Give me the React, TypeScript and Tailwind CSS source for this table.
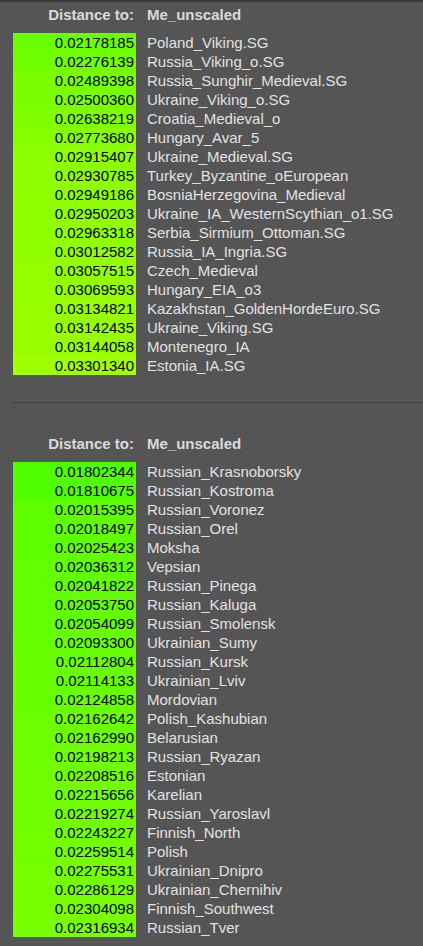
import React from "react";

type Row = { dist: string; name: string };

const ancient: Row[] = [
  { dist: "0.02178185", name: "Poland_Viking.SG" },
  { dist: "0.02276139", name: "Russia_Viking_o.SG" },
  { dist: "0.02489398", name: "Russia_Sunghir_Medieval.SG" },
  { dist: "0.02500360", name: "Ukraine_Viking_o.SG" },
  { dist: "0.02638219", name: "Croatia_Medieval_o" },
  { dist: "0.02773680", name: "Hungary_Avar_5" },
  { dist: "0.02915407", name: "Ukraine_Medieval.SG" },
  { dist: "0.02930785", name: "Turkey_Byzantine_oEuropean" },
  { dist: "0.02949186", name: "BosniaHerzegovina_Medieval" },
  { dist: "0.02950203", name: "Ukraine_IA_WesternScythian_o1.SG" },
  { dist: "0.02963318", name: "Serbia_Sirmium_Ottoman.SG" },
  { dist: "0.03012582", name: "Russia_IA_Ingria.SG" },
  { dist: "0.03057515", name: "Czech_Medieval" },
  { dist: "0.03069593", name: "Hungary_EIA_o3" },
  { dist: "0.03134821", name: "Kazakhstan_GoldenHordeEuro.SG" },
  { dist: "0.03142435", name: "Ukraine_Viking.SG" },
  { dist: "0.03144058", name: "Montenegro_IA" },
  { dist: "0.03301340", name: "Estonia_IA.SG" },
];

const modern: Row[] = [
  { dist: "0.01802344", name: "Russian_Krasnoborsky" },
  { dist: "0.01810675", name: "Russian_Kostroma" },
  { dist: "0.02015395", name: "Russian_Voronez" },
  { dist: "0.02018497", name: "Russian_Orel" },
  { dist: "0.02025423", name: "Moksha" },
  { dist: "0.02036312", name: "Vepsian" },
  { dist: "0.02041822", name: "Russian_Pinega" },
  { dist: "0.02053750", name: "Russian_Kaluga" },
  { dist: "0.02054099", name: "Russian_Smolensk" },
  { dist: "0.02093300", name: "Ukrainian_Sumy" },
  { dist: "0.02112804", name: "Russian_Kursk" },
  { dist: "0.02114133", name: "Ukrainian_Lviv" },
  { dist: "0.02124858", name: "Mordovian" },
  { dist: "0.02162642", name: "Polish_Kashubian" },
  { dist: "0.02162990", name: "Belarusian" },
  { dist: "0.02198213", name: "Russian_Ryazan" },
  { dist: "0.02208516", name: "Estonian" },
  { dist: "0.02215656", name: "Karelian" },
  { dist: "0.02219274", name: "Russian_Yaroslavl" },
  { dist: "0.02243227", name: "Finnish_North" },
  { dist: "0.02259514", name: "Polish" },
  { dist: "0.02275531", name: "Ukrainian_Dnipro" },
  { dist: "0.02286129", name: "Ukrainian_Chernihiv" },
  { dist: "0.02304098", name: "Finnish_Southwest" },
  { dist: "0.02316934", name: "Russian_Tver" },
];

// red channel goes up with distance, green stays full
const shade = (rows: Row[], d: number, lo: number, hi: number) => {
  const min = parseFloat(rows[0].dist);
  const max = parseFloat(rows[rows.length - 1].dist);
  const r = Math.round(lo + ((d - min) / (max - min)) * (hi - lo));
  return `rgb(${r}, 255, 0)`;
};

const DistTable = ({ rows, lo, hi }: { rows: Row[]; lo: number; hi: number }) => (
  <div className="pl-[13px]">
    <div className="flex h-[19px] leading-[19px] font-bold text-[#dadada]">
      <div className="w-[123px] shrink-0 text-right pr-[2px]">Distance to:</div>
      <div className="pl-[11px]">Me_unscaled</div>
    </div>
    <div className="mt-[9px]">
      {rows.map((row) => (
        <div key={row.name} className="flex h-[19px]">
          <div
            className="w-[123px] shrink-0 text-right pr-[2px] pt-[1px] leading-[18px] text-black"
            style={{ backgroundColor: shade(rows, parseFloat(row.dist), lo, hi) }}
          >
            {row.dist}
          </div>
          <div className="pl-[11px] pt-[1px] leading-[18px] text-[#e2e2e2] whitespace-nowrap">
            {row.name}
          </div>
        </div>
      ))}
    </div>
  </div>
);

const App = () => {
  return (
    <div className="min-h-[946px] bg-[#555555] border-t-2 border-[#3b3b3b] text-[15px] font-['Liberation_Sans',Arial,sans-serif] overflow-hidden">
      <div className="pt-[3px]">
        <DistTable rows={ancient} lo={106} hi={160} />
      </div>
      <div className="ml-[13px] mt-[27px] border-t border-[#3c3c3c]" />
      <div className="pt-[31px]">
        <DistTable rows={modern} lo={78} hi={120} />
      </div>
    </div>
  );
};

export default App;
